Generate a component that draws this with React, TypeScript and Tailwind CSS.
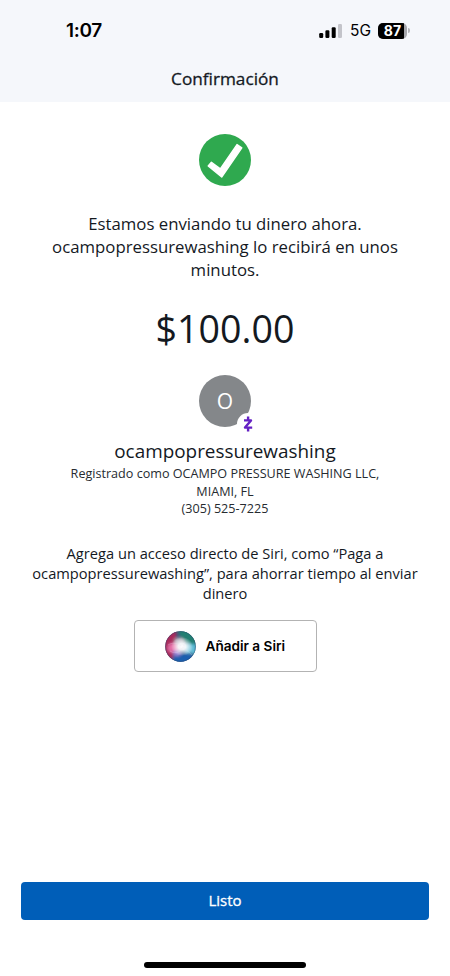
const StatusBar = () => {
  return (
    <div className="flex h-[61px] items-center justify-between pl-[66px] pr-[40px] font-['Inter','Liberation_Sans',sans-serif] text-black">
      <span className="pt-px text-[19px] font-semibold leading-6 tracking-[-0.3px]">
        1:07
      </span>

      <div className="flex items-center">
        <SignalIcon />
        <span className="ml-[8px] pt-px text-[15.5px] leading-6">5G</span>
        <div className="ml-[7px] flex items-center">
          <div className="flex h-[16px] w-[29px] overflow-hidden rounded-[5px] bg-[#a5a6ab]">
            <span className="flex h-full w-[26px] items-center justify-center bg-black pl-[3px] text-[14px] font-bold leading-none text-white">
              87
            </span>
          </div>
          <span className="ml-px h-[5px] w-[2px] rounded-r-full bg-[#b4b5ba]" />
        </div>
      </div>
    </div>
  );
};

const SignalIcon = () => (
  <svg width="23" height="14" viewBox="0 0 23 14">
    <rect x="0.2" y="9" width="4" height="5" rx="1.2" fill="#000" />
    <rect x="6.4" y="6.3" width="4" height="7.7" rx="1.2" fill="#000" />
    <rect x="12.7" y="3.3" width="4" height="10.7" rx="1.2" fill="#000" />
    <rect x="19" y="0" width="4" height="14" rx="1.2" fill="#c3c4ca" />
  </svg>
);

const SuccessIcon = () => (
  <svg width="52" height="52" viewBox="0 0 52 52">
    <circle cx="26" cy="26" r="26" fill="#2fa94f" />
    <path
      d="M12.4 28.2 9.2 32 22.7 43 42.8 13.8 38 10.6 21.3 34.9z"
      fill="#fff"
      stroke="#fff"
      strokeWidth="1.4"
      strokeLinejoin="round"
    />
  </svg>
);

const ZelleIcon = () => (
  <svg width="22" height="22" viewBox="0 0 22 22">
    <circle cx="11" cy="11" r="11" fill="#fff" />
    <g fill="none" stroke="#6421c4" strokeWidth="2.4">
      <path d="M7 7.4h7L8 14.6h7.2" strokeLinejoin="round" />
      <path d="M11.1 3.5v3.9M11.1 14.6v4" />
    </g>
  </svg>
);

const SiriIcon = () => (
  <svg width="31" height="31" viewBox="0 0 31 31">
    <defs>
      <clipPath id="orb">
        <circle cx="15.5" cy="15.5" r="15.2" />
      </clipPath>
      <filter id="soft" x="-50%" y="-50%" width="200%" height="200%">
        <feGaussianBlur stdDeviation="1.8" />
      </filter>
      <radialGradient id="glow">
        <stop offset="0" stopColor="#fff" />
        <stop offset="0.35" stopColor="#fff" stopOpacity="0.9" />
        <stop offset="1" stopColor="#fff" stopOpacity="0" />
      </radialGradient>
    </defs>
    <g clipPath="url(#orb)">
      <rect width="31" height="31" fill="#35517c" />
      <g filter="url(#soft)">
        <path d="M-2-2h13l1 15-5 16H-2z" fill="#a82c5c" />
        <path d="M12-2h20v16l-14-2z" fill="#207f72" />
        <path d="M20 13h12v12l-9-4z" fill="#4fb4cc" />
        <path d="M8 25l14-3 8 4-8 8H8z" fill="#1a5faf" />
        <ellipse cx="8.5" cy="17" rx="6" ry="5" fill="#e56fa8" />
        <ellipse cx="12" cy="22" rx="4" ry="3" fill="#9b83d3" />
        <ellipse cx="14" cy="10" rx="5" ry="3.5" fill="#aaa4b4" />
        <ellipse cx="24" cy="18" rx="5" ry="4.5" fill="#6fc3dc" />
      </g>
      <ellipse cx="17" cy="15.5" rx="11" ry="9.5" fill="url(#glow)" />
      <path
        d="M3 14c8-5 14 1 24 10M5 20c6 4 12 1 15-9"
        fill="none"
        stroke="#f3e6f8"
        strokeWidth="0.7"
        opacity="0.35"
      />
    </g>
    <circle
      cx="15.5"
      cy="15.5"
      r="15"
      fill="none"
      stroke="#254565"
      strokeWidth="0.7"
      opacity="0.4"
    />
  </svg>
);

const Recipient = () => {
  return (
    <section className="mt-[22px] flex flex-col items-center">
      <div className="relative flex size-[52px] items-center justify-center rounded-full bg-[#84878a]">
        <span className="text-[21px] leading-none text-white">O</span>
        <span className="absolute left-[38px] top-[38px]">
          <ZelleIcon />
        </span>
      </div>
      <h2 className="mt-[10px] text-[18.9px] leading-[28px]">
        ocampopressurewashing
      </h2>
      <p className="text-[12.6px] leading-[17.5px] text-[#262b30]">
        Registrado como OCAMPO PRESSURE WASHING LLC,
        <br />
        MIAMI, FL
        <br />
        (305) 525-7225
      </p>
    </section>
  );
};

const App = () => {
  return (
    <div className="flex h-[976px] w-[450px] flex-col bg-white font-['Open_Sans','Noto_Sans',sans-serif] text-[#14191f]">
      <header className="h-[102px] bg-[#f5f7fb]">
        <StatusBar />
        <h1 className="pt-[6px] text-center text-[17.2px] leading-6 [-webkit-text-stroke:0.3px]">
          Confirmación
        </h1>
      </header>

      <main className="flex flex-1 flex-col items-center pt-8 text-center">
        <SuccessIcon />
        <p className="mt-[27px] text-[16.77px] leading-[22.8px]">
          Estamos enviando tu dinero ahora.
          <br />
          ocampopressurewashing lo recibirá en unos
          <br />
          minutos.
        </p>
        <p className="mt-[24px] text-[37.6px] leading-[48px]">$100.00</p>

        <Recipient />

        <p className="mt-[25px] text-[14.65px] leading-[20px]">
          Agrega un acceso directo de Siri, como “Paga a
          <br />
          ocampopressurewashing”, para ahorrar tiempo al enviar
          <br />
          dinero
        </p>
        <button className="mt-[17.5px] flex h-[52px] w-[183px] items-center rounded-[4px] border border-[#b3b3b3] pl-[30px] font-['Inter','Liberation_Sans',sans-serif] text-[13.6px] font-semibold text-black">
          <SiriIcon />
          <span className="ml-[10px]">Añadir a Siri</span>
        </button>
      </main>

      <footer className="flex flex-col items-center px-[21px] pb-[8px]">
        <button className="h-[38px] w-full rounded-[4px] bg-[#005eb8] pb-px text-[15px] text-white [-webkit-text-stroke:0.3px]">
          Listo
        </button>
        <div className="mt-[42px] h-[6px] w-[162px] rounded-full bg-black" />
      </footer>
    </div>
  );
};

export default App;
